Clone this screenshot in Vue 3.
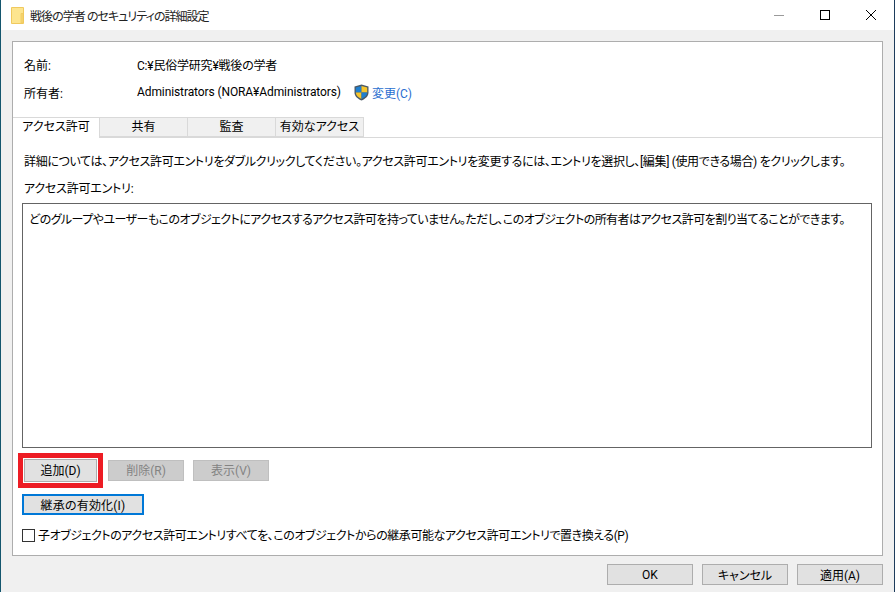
<script setup>
const tabs = ['アクセス許可', '共有', '監査', '有効なアクセス']
</script>

<template>
  <div class="win">
    <header class="title">
      <svg class="folder" width="13" height="17" viewBox="0 0 13 17">
        <path d="M0.5 0.5 H12.5 V16.5 H0.5 Z" fill="#fde58f" stroke="#f0c95e" />
        <path d="M10 16 V6.5 H12 V16 Z" fill="#f7d774" stroke="#f0c95e" stroke-width="0.8" />
      </svg>
      <span class="title-text">戦後の学者 のセキュリティの詳細設定</span>
      <div class="controls">
        <span class="ctl"><svg width="10" height="10"><path d="M0 5.5H10" stroke="#9a9a9a" /></svg></span>
        <span class="ctl"><svg width="10" height="10"><rect x="0.5" y="0.5" width="9" height="9" fill="none" stroke="#000" /></svg></span>
        <span class="ctl"><svg width="10" height="10"><path d="M0 0L10 10M10 0L0 10" stroke="#000" /></svg></span>
      </div>
    </header>

    <main class="body">
      <section class="panel">
        <div class="info">
          <div class="row"><span class="lbl">名前:</span><span class="path">C:¥民俗学研究¥戦後の学者</span></div>
          <div class="row">
            <span class="lbl">所有者:</span>
            <span class="owner">Administrators (NORA¥Administrators)</span>
            <svg class="shield" width="15" height="17" viewBox="0 0 15 17">
              <path d="M7.5 0.5 L14.5 2.5 V8.5 C14.5 12.5 11 15 7.5 16.5 C4 15 0.5 12.5 0.5 8.5 V2.5 Z" fill="#4c5a66" />
              <path d="M7.5 2 V8.5 H1.8 V3.6 Z" fill="#1f7fd0" />
              <path d="M7.5 2 L13.2 3.6 V8.5 H7.5 Z" fill="#f7c52b" />
              <path d="M1.8 8.5 H7.5 V15 C4.6 13.7 2 11.6 1.8 8.5 Z" fill="#f7c52b" />
              <path d="M7.5 8.5 H13.2 C13 11.6 10.4 13.7 7.5 15 Z" fill="#1f7fd0" />
            </svg>
            <a class="link">変更(C)</a>
          </div>
        </div>

        <nav class="tabs">
          <span v-for="(t, i) in tabs" :key="t" class="tab" :class="{ active: i === 0 }">{{ t }}</span>
        </nav>

        <div class="content">
          <p class="hint">詳細については、アクセス許可エントリをダブルクリックしてください。アクセス許可エントリを変更するには、エントリを選択し、[編集] (使用できる場合) をクリックします。</p>
          <p class="entry-label">アクセス許可エントリ:</p>
          <div class="listbox">どのグループやユーザーもこのオブジェクトにアクセスするアクセス許可を持っていません。ただし、このオブジェクトの所有者はアクセス許可を割り当てることができます。</div>

          <div class="actions">
            <span class="mark"><button class="btn add">追加(D)</button></span>
            <button class="btn off">削除(R)</button>
            <button class="btn off">表示(V)</button>
          </div>
          <button class="btn inherit">継承の有効化(I)</button>
          <label class="check"><span class="box"></span><span class="check-text">子オブジェクトのアクセス許可エントリすべてを、このオブジェクトからの継承可能なアクセス許可エントリで置き換える(P)</span></label>
        </div>
      </section>

      <footer class="foot">
        <button class="btn f">OK</button>
        <button class="btn f">キャンセル</button>
        <button class="btn f">適用(A)</button>
      </footer>
    </main>
  </div>
</template>

<style>
html, body { margin: 0; padding: 0; overflow: hidden; }
</style>

<style scoped>
.win {
  width: 895px;
  height: 592px;
  box-sizing: border-box;
  border-left: 1px solid #14566e;
  border-right: 1px solid #1d3c5c;
  background: #f0f0f0;
  display: flex;
  flex-direction: column;
  font-family: Roboto, "Noto Sans CJK JP", sans-serif;
  font-feature-settings: "palt";
  font-size: 12px;
  color: #000;
  overflow: hidden;
}
.title {
  height: 30px;
  flex: none;
  background: #fff;
  display: flex;
  align-items: center;
  padding-left: 10px;
}
.folder { margin-right: 6px; }
.title-text { color: #222; letter-spacing: -0.95px; }
.controls { margin-left: auto; display: flex; }
.ctl { width: 46px; height: 30px; display: flex; align-items: center; justify-content: center; }
.ctl svg { display: block; }
.body { flex: 1; display: flex; flex-direction: column; padding: 11px 11px 0 11px; }
.panel {
  height: 515px;
  box-sizing: border-box;
  border: 1px solid #adadad;
  background: #fff;
  display: flex;
  flex-direction: column;
}
.info { padding: 13px 0 0 11px; height: 62px; flex: none; }
.row { display: flex; align-items: center; height: 18px; margin-bottom: 10px; }
.lbl { width: 113px; flex: none; }
.path { letter-spacing: -0.2px; }
.owner { letter-spacing: -0.1px; }
.shield { margin: 0 3px 0 13px; }
.link { color: #2b6ecf; }
.tabs { display: flex; height: 20px; border-bottom: 1px solid #d9d9d9; flex: none; }
.tab {
  width: 88px;
  box-sizing: border-box;
  border: 1px solid #d9d9d9;
  border-left: 0;
  background: #f0f0f0;
  text-align: center;
  line-height: 18px;
}
.tab.active { background: #fff; height: 21px; border-bottom: 0; width: 87px; }
.content { flex: 1; padding: 0 10px 0 9px; }
.hint { margin: 15px 0 0; padding-left: 2px; line-height: 18px; white-space: nowrap; letter-spacing: -0.34px; }
.entry-label { margin: 9px 0 0; padding-left: 2px; line-height: 18px; letter-spacing: -0.2px; }
.listbox {
  margin-top: 5px;
  height: 245px;
  box-sizing: border-box;
  border: 1px solid #646464;
  padding: 7px 6px;
  line-height: 18px;
  white-space: nowrap;
  letter-spacing: -0.55px;
}
.btn {
  font: inherit;
  font-feature-settings: inherit;
  padding: 0;
  background: #e1e1e1;
  border: 1px solid #adadad;
  color: #000;
  height: 21px;
  display: block;
}
.actions { display: flex; align-items: center; margin-top: 5px; margin-left: -4px; }
.mark { display: block; border: 5px solid #ed1c24; }
.add { width: 75px; box-sizing: border-box; height: 25px; padding-bottom: 2px; border: 1px solid #fff; box-shadow: inset 0 0 0 1px #adadad; }
.off { width: 76px; margin-left: 5px; background: #cccccc; border-color: #bfbfbf; color: #838383; padding-bottom: 2px; }
.off + .off { margin-left: 9px; }
.inherit { width: 122px; margin-top: 6px; border: 2px solid #0078d7; letter-spacing: 0.2px; }
.check { display: flex; align-items: center; margin-top: 11px; height: 18px; white-space: nowrap; }
.check-text { letter-spacing: -0.43px; margin-bottom: 2px; }
.box { width: 11px; height: 11px; border: 1px solid #333; margin-right: 3px; flex: none; background: #fff; }
.foot { display: flex; justify-content: flex-end; gap: 9px; padding: 8px 0 0; }
.f { width: 86px; height: 21px; }
</style>
